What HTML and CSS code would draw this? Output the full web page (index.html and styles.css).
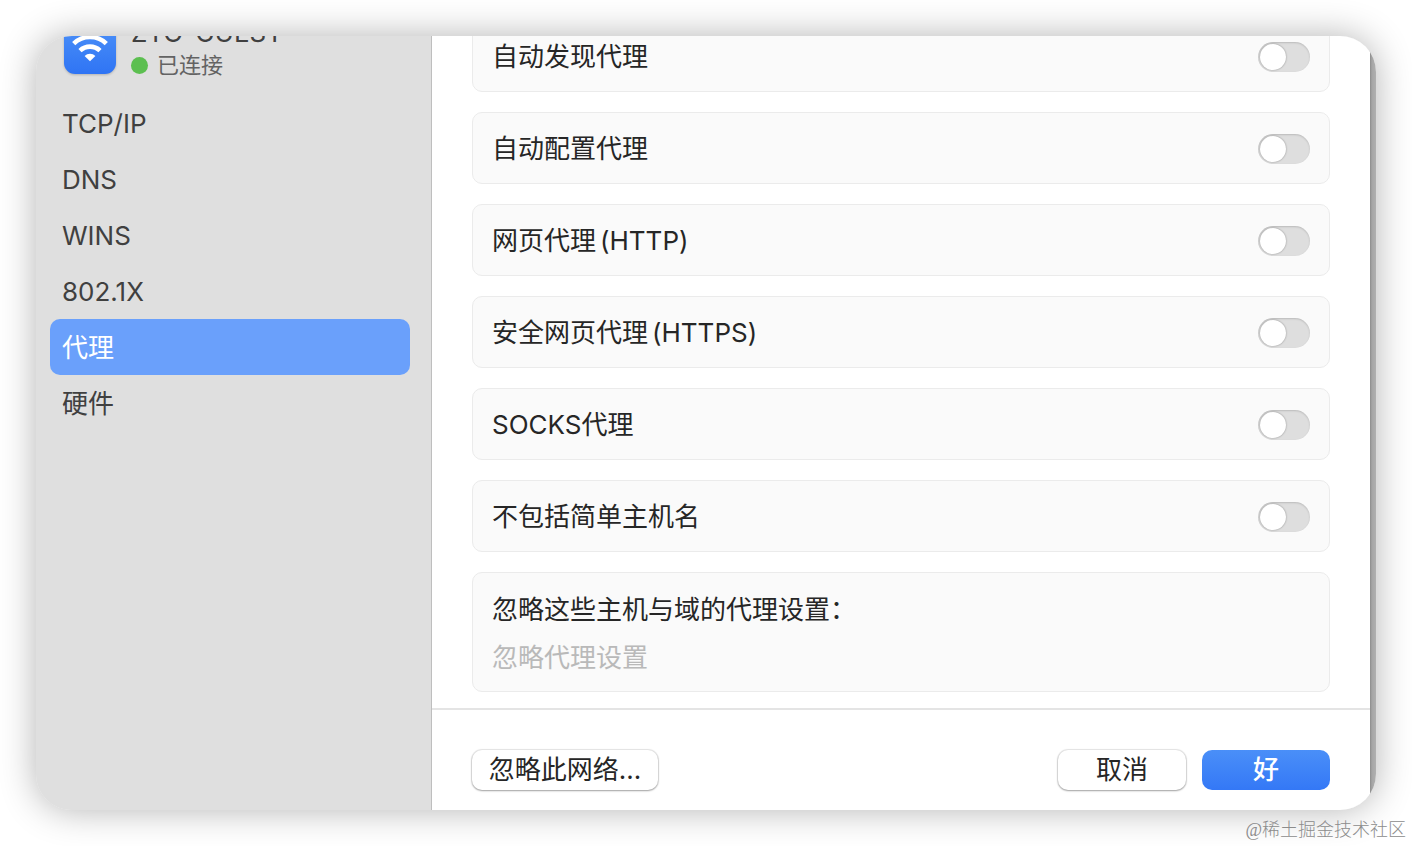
FILE: index.html
```html
<!DOCTYPE html>
<html lang="zh-CN">
<head>
    <meta charset="UTF-8">
    <meta name="viewport" content="width=device-width, initial-scale=1.0">
    <title>代理</title>
    <link rel="stylesheet" href="styles.css">
</head>
<body>
    <div class="window">
        <aside class="sidebar">
            <div class="network">
                <svg class="network-icon" viewBox="0 0 52 52" aria-hidden="true">
                    <defs>
                        <linearGradient id="wifi-bg" x1="0" y1="0" x2="0" y2="1">
                            <stop offset="0" stop-color="#4d92f8"/>
                            <stop offset="1" stop-color="#2f74f4"/>
                        </linearGradient>
                    </defs>
                    <rect width="52" height="52" rx="11" fill="url(#wifi-bg)"/>
                    <g fill="none" stroke="#fff" stroke-width="4.6">
                        <path d="M9.7 21.6a23.6 23.6 0 0 1 32.6 0"/>
                        <path d="M16 28.6a14.6 14.6 0 0 1 20 0"/>
                    </g>
                    <path d="M26 39.2l-5.4-5.3a7.8 7.8 0 0 1 10.8 0z" fill="#fff"/>
                </svg>
                <div>
                    <div class="network-name">ZTO-GUEST</div>
                    <div class="network-status"><span class="dot"></span>已连接</div>
                </div>
            </div>
            <nav class="menu">
                <a href="#tcpip">TCP/IP</a>
                <a href="#dns">DNS</a>
                <a href="#wins">WINS</a>
                <a href="#8021x">802.1X</a>
                <a class="active" href="#proxy" aria-current="page">代理</a>
                <a href="#hardware">硬件</a>
            </nav>
        </aside>

        <main class="main">
            <div class="settings">
                <label class="card">自动发现代理<input class="switch" type="checkbox"></label>
                <label class="card">自动配置代理<input class="switch" type="checkbox"></label>
                <label class="card"><span>网页代理<span class="latin">(HTTP)</span></span><input class="switch" type="checkbox"></label>
                <label class="card"><span>安全网页代理<span class="latin">(HTTPS)</span></span><input class="switch" type="checkbox"></label>
                <label class="card">SOCKS代理<input class="switch" type="checkbox"></label>
                <label class="card">不包括简单主机名<input class="switch" type="checkbox"></label>
                <div class="card card-field">
                    <label for="bypass">忽略这些主机与域的代理设置：</label>
                    <input id="bypass" type="text" placeholder="忽略代理设置">
                </div>
            </div>
            <div class="actions">
                <button class="btn btn-forget" type="button">忽略此网络...</button>
                <button class="btn" type="button">取消</button>
                <button class="btn btn-primary" type="button">好</button>
            </div>
        </main>
    </div>
    <div class="watermark">@稀土掘金技术社区</div>
</body>
</html>
```
FILE: styles.css
```css
:root {
    --text: #262626;
    --sidebar: #dfdfdf;
    --blue: #6aa0fb;
}

* {
    box-sizing: border-box;
    margin: 0;
    padding: 0;
}

body {
    font-family: Inter, "Noto Sans CJK SC", sans-serif;
    font-size: 26px;
    color: var(--text);
    background: #fff;
    min-height: 100vh;
    display: flex;
    flex-direction: column;
    padding: 36px 36px 0;
}

.window {
    flex: 1;
    display: flex;
    padding-right: 6px;
    border-radius: 36px;
    overflow: hidden;
    background: linear-gradient(to left, #b0b0b0, #a6a6a6 4px, #8c8c8c 6px, var(--sidebar) 7px);
    box-shadow: 0 0 36px rgba(0, 0, 0, 0.3);
}

/* Sidebar */
.sidebar {
    width: 396px;
    flex-shrink: 0;
    background: var(--sidebar);
    border-right: 1px solid #bebebe;
    color: #404040;
}

/* header is scrolled partly out of the window */
.network {
    display: flex;
    gap: 15px;
    height: 73px;
    margin-top: -14px;
    padding-left: 28px;
}

.network-icon {
    width: 52px;
    height: 52px;
    filter: drop-shadow(0 1px 1px rgba(0, 0, 0, 0.2));
}

.network-name {
    margin-bottom: 5px;
    line-height: 22px;
}

.network-status {
    display: flex;
    align-items: center;
    gap: 9px;
    font-size: 22px;
    line-height: 32px;
    color: #636363;
}

.dot {
    width: 17px;
    height: 17px;
    border-radius: 50%;
    background: #5cbf50;
}

.menu {
    padding: 0 21px 0 14px;
}

.menu a {
    display: block;
    padding: 2px 12px 0;
    line-height: 54px;
    border-radius: 10px;
    color: inherit;
    text-decoration: none;
}

.menu a.active {
    background: var(--blue);
    color: #fff;
}

/* Settings */
.main {
    flex: 1;
    min-width: 0;
    display: flex;
    flex-direction: column;
    background: #fff;
}

.settings {
    flex: 1;
    display: flex;
    flex-direction: column;
    gap: 20px;
    margin-top: -16px;
    padding: 0 40px 16px;
}

.card {
    display: flex;
    align-items: center;
    justify-content: space-between;
    height: 72px;
    padding: 2px 19px 0;
    line-height: 48px;
    background: #fafafa;
    border: 1px solid #ebebeb;
    border-radius: 10px;
}

.latin {
    margin-left: 4px;
}

.card-field {
    display: block;
    height: auto;
    padding: 13px 19px 9px;
}

.card-field label {
    display: block;
}

.card-field input {
    display: block;
    width: 100%;
    height: 48px;
    border: none;
    outline: none;
    background: none;
    font: inherit;
    color: inherit;
}

.card-field input::placeholder {
    color: #b9b9b9;
}

.switch {
    appearance: none;
    width: 52px;
    height: 30px;
    border-radius: 15px;
    background: #dedede;
    box-shadow: inset 0 1px 2px rgba(0, 0, 0, 0.16);
    cursor: pointer;
}

.switch::before {
    content: '';
    display: block;
    width: 26px;
    height: 26px;
    margin: 2px;
    border-radius: 50%;
    background: #fff;
    box-shadow: 0 0 2px rgba(0, 0, 0, 0.4);
}

.switch:checked {
    background: var(--blue);
}

.switch:checked::before {
    margin-left: 24px;
}

/* Buttons */
.actions {
    display: flex;
    gap: 16px;
    padding: 40px 40px 20px;
    border-top: 2px solid #e4e4e4;
}

.btn {
    width: 128px;
    height: 40px;
    border: none;
    border-radius: 10px;
    background: #fff;
    box-shadow: 0 0 1px 1px rgba(0, 0, 0, 0.1), 0 1px 2px rgba(0, 0, 0, 0.3);
    font: inherit;
    line-height: 38px;
    color: var(--text);
    cursor: pointer;
}

.btn-forget {
    width: 186px;
    margin-right: auto;
}

.btn-primary {
    background: linear-gradient(#4a8ff8, #3478f6);
    box-shadow: none;
    color: #fff;
    font-weight: 500;
}

.watermark {
    margin-right: -30px;
    padding-top: 4px;
    font-family: "Liberation Serif", "Noto Sans CJK SC", serif;
    font-size: 18px;
    font-weight: 300;
    line-height: 32px;
    text-align: right;
    color: #8c8c8c;
}
```
